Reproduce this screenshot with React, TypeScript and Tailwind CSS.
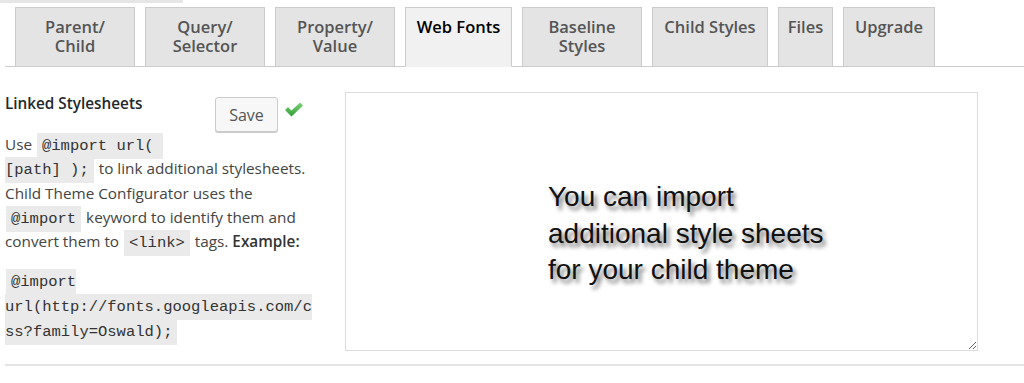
import React from 'react';

const tabs = [
  { label: ['Parent/', 'Child'], w: 'w-[120px]' },
  { label: ['Query/', 'Selector'], w: 'w-[120px]' },
  { label: ['Property/', 'Value'], w: 'w-[120px]' },
  { label: ['Web Fonts'], w: 'w-[107px]', active: true },
  { label: ['Baseline', 'Styles'], w: 'w-[120px]' },
  { label: ['Child Styles'], w: 'w-[116px]' },
  { label: ['Files'], w: 'w-[55px]' },
  { label: ['Upgrade'], w: 'w-[92px]' },
];

function Code({ children }: { children: React.ReactNode }) {
  return (
    <code className="bg-[#eaeaea] px-[5px] pt-[4px] pb-[4px] mx-px text-[15.5px] leading-[17px] text-[#333] font-['Liberation_Mono','DejaVu_Sans_Mono',monospace]">
      {children}
    </code>
  );
}

function Check() {
  return (
    <svg width="20" height="17" viewBox="0 0 20 16" className="ml-[6px] mt-[9px]">
      <defs>
        <linearGradient id="g" x1="0" y1="0" x2="0" y2="1">
          <stop offset="0" stopColor="#7fd67a" />
          <stop offset="1" stopColor="#2f9a35" />
        </linearGradient>
      </defs>
      <path d="M1 8.5 L4 5.5 L7.5 9 L16 1 L19 4 L7.5 15 Z" fill="url(#g)" />
    </svg>
  );
}

export default function App() {
  return (
    <div className="w-[1024px] h-[383px] bg-white overflow-hidden font-['Open_Sans','Noto_Sans',sans-serif] relative">
      <div className="absolute left-0 top-0 w-[183px] h-[3px] bg-[#e6e6e6]" />
      <div className="pt-[7px] ml-[5px]">
        <div className="flex items-end gap-[10px] pl-[10px] border-b border-[#cccccc] h-[60px]">
          {tabs.map((t) => (
            <div
              key={t.label.join(' ')}
              className={
                t.active
                  ? `${t.w} h-[60px] -mb-px border border-[#cccccc] border-b-[#f1f1f1] bg-[#f1f1f1] text-black flex flex-col items-center pt-[9px] text-[16.5px] leading-[19px] font-semibold`
                  : `${t.w} h-[59px] border border-b-0 border-[#cccccc] bg-[#e4e4e4] text-[#555] flex flex-col items-center pt-[9px] text-[16.5px] leading-[19px] font-semibold`
              }
            >
              {t.label.map((l) => (
                <span key={l}>{l}</span>
              ))}
            </div>
          ))}
        </div>
      </div>

      <div className="flex ml-[5px] mt-[25px] h-[260px]">
        <div className="w-[320px] text-[15.3px] text-[#444]">
          <div className="flex items-start">
            <div className="w-[210px] font-semibold text-[#23282d]">Linked Stylesheets</div>
            <button className="w-[63px] h-[35px] mt-[5px] border border-[#cccccc] rounded-[3px] bg-[#f7f7f7] shadow-[0_1px_0_#cccccc] text-[16px] text-[#555]">
              Save
            </button>
            <Check />
          </div>
          <div className="leading-[24.3px] whitespace-nowrap">
            <div>
              Use{' '}
              <Code>
                @import url(&nbsp;
                <br />
                [path] );
              </Code>{' '}
              to link additional stylesheets.
            </div>
            <div>Child Theme Configurator uses the</div>
            <div>
              <Code>@import</Code> keyword to identify them and
            </div>
            <div>
              convert them to <Code>&lt;link&gt;</Code> tags. <span className="font-semibold text-[#333]">Example:</span>
            </div>
          </div>
          <p className="mt-[15px] leading-[25px] whitespace-nowrap">
            <Code>
              @import
              <br />
              url(http://fonts.googleapis.com/c
              <br />
              ss?family=Oswald);
            </Code>
          </p>
        </div>
        <div className="ml-[20px] w-[633px] h-[259px] border border-[#dddddd] resize overflow-auto pl-[202px] pt-[86px]">
          <div className="font-['Liberation_Sans',Arial,sans-serif] text-[28px] leading-[36.5px] text-[#111] [text-shadow:3px_4px_4px_rgba(0,0,0,0.55)]">
            <div>You can import</div>
            <div>additional style sheets</div>
            <div>for your child theme</div>
          </div>
        </div>
      </div>

      <div className="ml-[5px] mt-[12px] border-t-2 border-[#e5e5e5]" />
    </div>
  );
}
